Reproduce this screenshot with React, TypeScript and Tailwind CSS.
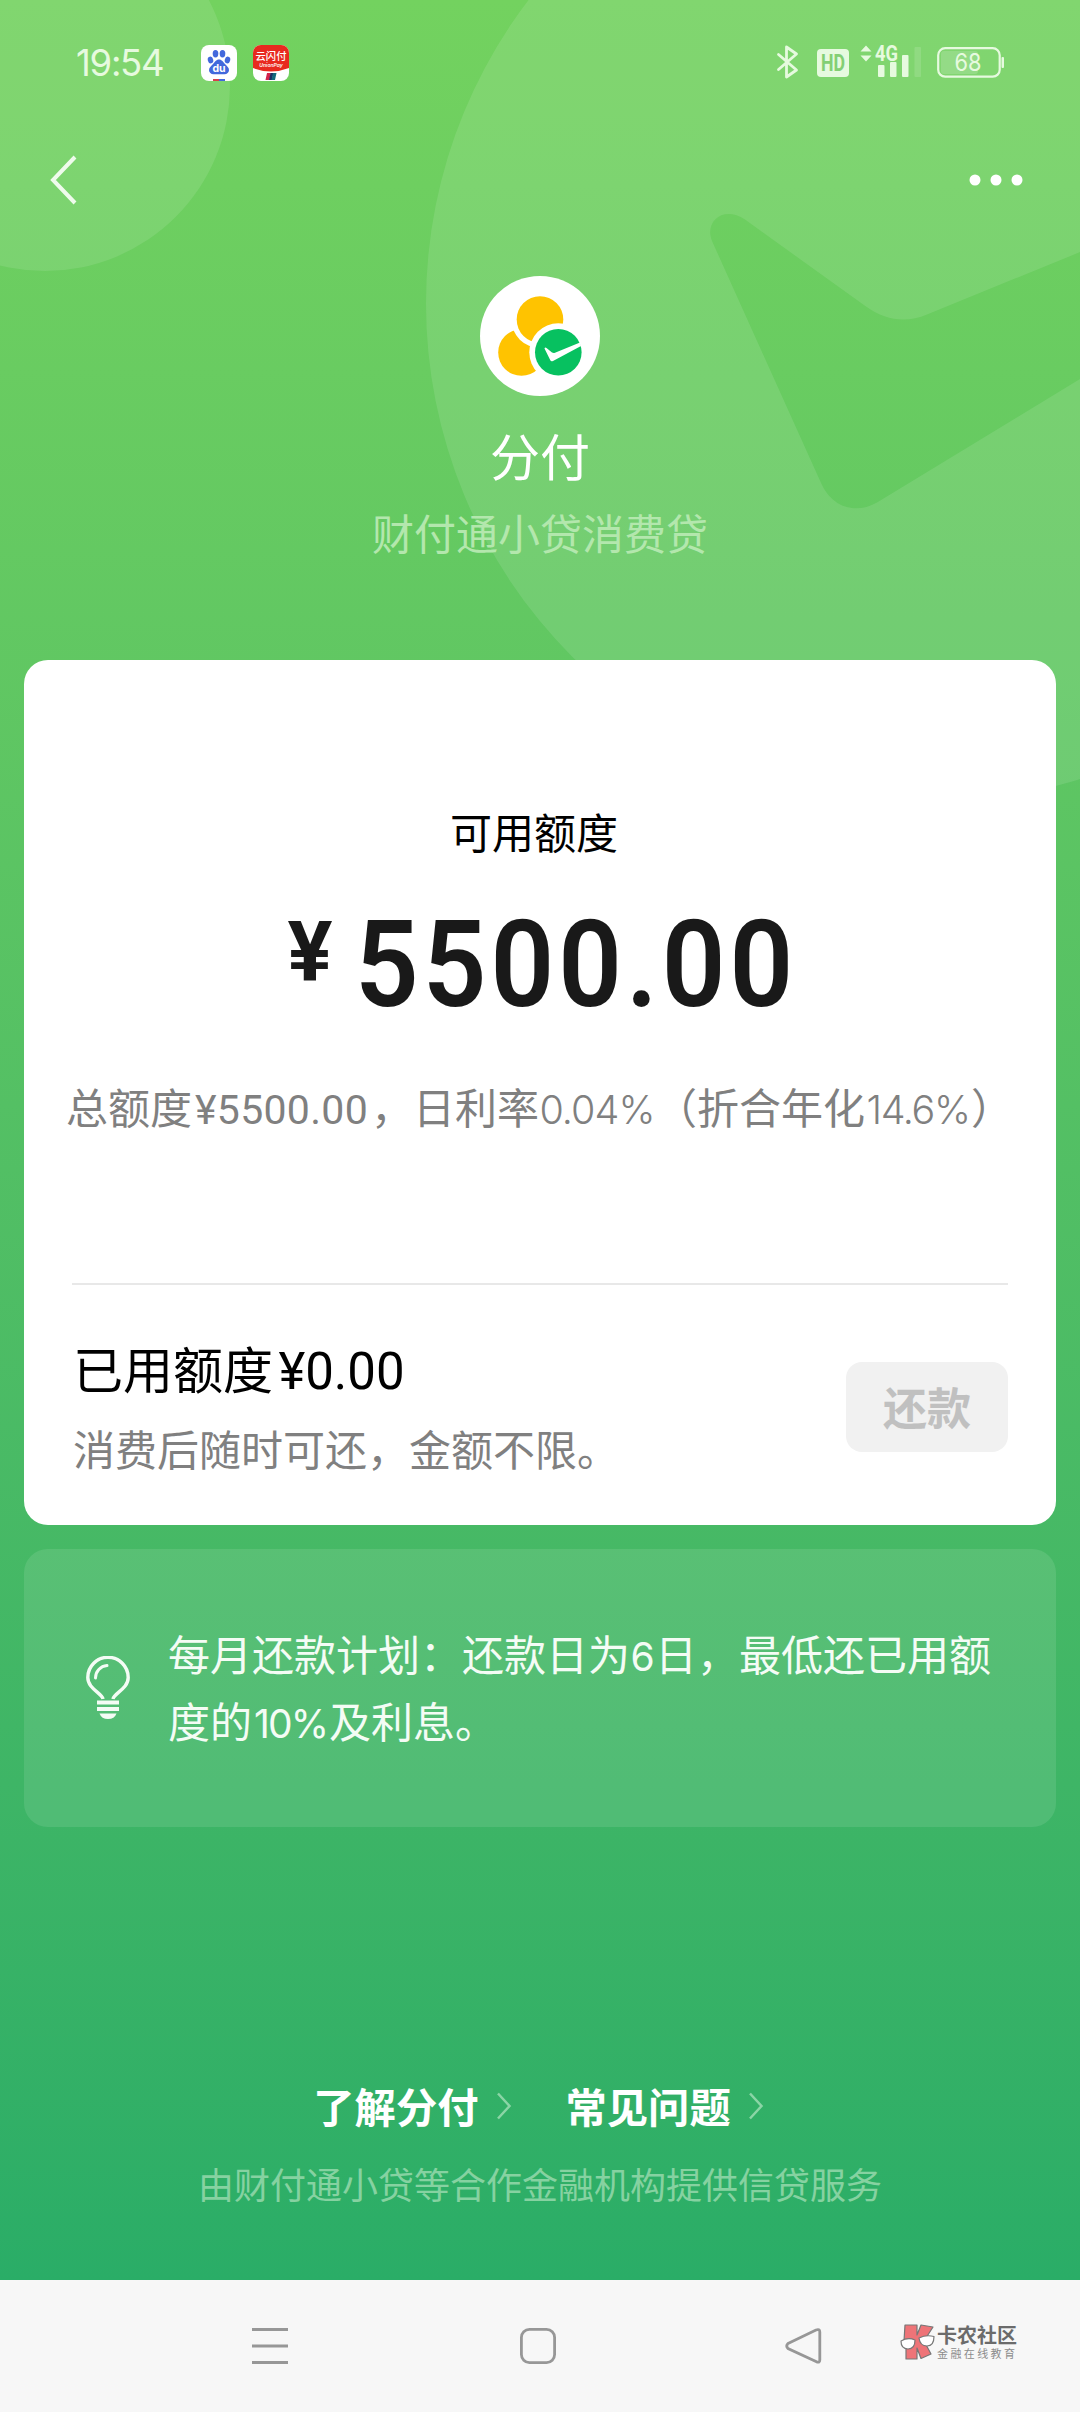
import type { ReactNode } from 'react';

const FOOTER_LINKS = ['了解分付', '常见问题'];

function Backdrop() {
  return (
    <svg className="absolute inset-0" width="1080" height="2280" viewBox="0 0 1080 2280" fill="#fff" fillOpacity="0.105">
      <circle cx="45" cy="86" r="185" />
      <path
        fillRule="evenodd"
        d="M926 -196.6a500 500 0 1 1 0 1000a500 500 0 1 1 0 -1000Z
           M745 219.6L866 306.5C886 321 907 323 927 314.5L1090 248V373L877 502.4C855 515 831 507 820.6 482L712 241C704 221 724 205 745 219.6Z"
      />
    </svg>
  );
}

function BaiduIcon() {
  return (
    <svg width="36" height="36" viewBox="0 0 36 36">
      <rect width="36" height="36" rx="8" fill="#fff" />
      <g fill="#4268dc">
        <ellipse cx="9.5" cy="15" rx="2.7" ry="3.4" transform="rotate(-15 9.5 15)" />
        <ellipse cx="14.5" cy="8.7" rx="2.8" ry="3.7" />
        <ellipse cx="21.5" cy="8.7" rx="2.8" ry="3.7" />
        <ellipse cx="26.5" cy="15" rx="2.7" ry="3.4" transform="rotate(15 26.5 15)" />
        <path d="M18 14.5c3 0 4.2 2.6 6 4.6c2 2.2 4 3.4 4 6.2c0 2.4-2 3.9-4.5 3.9h-11C10 29.2 8 27.7 8 25.3c0-2.8 2-4 4-6.2c1.8-2 3-4.6 6-4.6Z" />
      </g>
      <text x="18" y="27.2" textAnchor="middle" fontFamily="Inter" fontWeight="700" fontSize="10.5" fill="#fff">du</text>
      <rect x="12" y="34" width="6" height="2" fill="#d8404a" />
      <rect x="18" y="34" width="6" height="2" fill="#4268dc" />
    </svg>
  );
}

function UnionPayIcon() {
  return (
    <svg width="36" height="36" viewBox="0 0 36 36">
      <rect width="36" height="36" rx="8" fill="#fff" />
      <path d="M8 0H28A8 8 0 0 1 36 8V23Q18 30 0 23V8A8 8 0 0 1 8 0Z" fill="#e8291f" />
      <text x="18" y="15" textAnchor="middle" fontFamily="Noto Sans CJK SC" fontWeight="500" fontSize="10.3" fill="#fff">云闪付</text>
      <text x="18" y="21.5" textAnchor="middle" fontFamily="Inter" fontStyle="italic" fontWeight="600" fontSize="5" fill="#fff">UnionPay</text>
      <path d="M14 28h4l-1.5 7h-4Z" fill="#d3214b" />
      <path d="M17.5 28h3l-1.5 7h-3Z" fill="#1d2f63" />
      <path d="M20 28h3.5l-1.5 7h-3.5Z" fill="#12697a" />
    </svg>
  );
}

function StatusBar() {
  return (
    <div className="flex h-[122px] items-start justify-between pt-11 pr-[75px] pl-[76px] text-[#e6fadf]">
      <div className="flex items-start">
        <span className="w-[125px] font-['Inter'] text-[36.5px] leading-[38px] tracking-[-1.3px]">19:54</span>
        <div className="mt-px flex gap-4">
          <BaiduIcon />
          <UnionPayIcon />
        </div>
      </div>
      <svg className="-mt-3" width="230" height="60" viewBox="775 32 230 60" fill="currentColor">
        <path d="M778.5 54.5L796.5 70L786.5 77V47L796.5 54L778.5 69.5" fill="none" stroke="currentColor" strokeWidth="2.8" strokeLinejoin="round" strokeLinecap="round" />
        <rect x="817" y="49" width="32" height="28" rx="4" />
        <text x="833" y="71" textAnchor="middle" fontFamily="Roboto" fontWeight="700" fontSize="23" textLength="24" lengthAdjust="spacingAndGlyphs" fill="#83cf74">HD</text>
        <path d="M866 45.5L871.5 51.5H860.5ZM866 61.5L860.5 55.5H871.5Z" />
        <text x="875" y="61.3" fontFamily="Roboto" fontWeight="700" fontSize="22" textLength="23" lengthAdjust="spacingAndGlyphs">4G</text>
        <rect x="878" y="65" width="6.5" height="12" rx="1" />
        <rect x="890" y="62" width="6.5" height="15" rx="1" />
        <rect x="902" y="55" width="6.5" height="22" rx="1" />
        <rect x="914.5" y="47" width="6.5" height="30" rx="1" fillOpacity="0.16" />
        <rect x="941" y="51" width="37" height="23" rx="3" fill="#fff" fillOpacity="0.16" />
        <rect x="938.2" y="48.2" width="61.5" height="28.5" rx="7" fill="none" stroke="currentColor" strokeWidth="2.2" />
        <rect x="1001.5" y="57" width="2.5" height="11" rx="1" />
        <text x="968" y="71.3" textAnchor="middle" fontFamily="Inter" fontSize="24" textLength="27" lengthAdjust="spacingAndGlyphs">68</text>
      </svg>
    </div>
  );
}

function NavBar() {
  return (
    <div className="flex h-[116px] items-center justify-between pr-[57px] pl-12">
      <svg width="32" height="54" viewBox="0 0 32 54" fill="none" stroke="#effbec" strokeWidth="4">
        <path d="M27 4L5 27L27 50" />
      </svg>
      <svg width="54" height="12" viewBox="0 0 54 12" fill="#fff">
        <circle cx="6" cy="6" r="5.5" />
        <circle cx="27" cy="6" r="5.5" />
        <circle cx="48" cy="6" r="5.5" />
      </svg>
    </div>
  );
}

function Logo() {
  return (
    <svg width="120" height="120" viewBox="0 0 120 120">
      <circle cx="60" cy="60" r="60" fill="#fff" />
      <circle cx="41.5" cy="76.5" r="23.3" fill="#ffc300" />
      <circle cx="60" cy="43.5" r="28.5" fill="#fff" />
      <circle cx="60" cy="43.5" r="23.3" fill="#ffc300" />
      <circle cx="78.3" cy="76.3" r="29" fill="#fff" />
      <circle cx="78.3" cy="76.3" r="23.3" fill="#07c160" />
      <path d="M64.5 72.5Q65 71 66.5 72L72 76.5Q73.5 77.3 75 76.7L100 66.5L101 70L73 85Q71 86 70.2 84Z" fill="#fff" />
    </svg>
  );
}

// Latin runs inside Chinese copy keep a fixed measure
function Num({ className, children }: { className: string; children: ReactNode }) {
  return <span className={`inline-block text-center leading-none whitespace-nowrap ${className}`}>{children}</span>;
}

function QuotaCard() {
  return (
    <section className="mx-6 h-[865px] rounded-3xl bg-white px-12 pt-[141px]">
      <h2 className="mr-3 h-[60px] text-center text-[42px] leading-[60px] text-black">可用额度</h2>
      <div className="mt-[49px] flex h-[110px] items-start pl-[213px] font-['Roboto'] text-[#191919]">
        <span className="mt-px mr-[20px] w-[50px] text-center text-[84px] leading-[84px] font-bold">¥</span>
        <span className="origin-left scale-x-93 text-[120px] leading-[111px] font-semibold tracking-[4.3px]">5500.00</span>
      </div>
      <p className="-mx-[6px] mt-[56px] h-[60px] text-[42px] leading-[60px] whitespace-nowrap text-[#808080]">
        总额度
        <Num className="w-[179px] font-['Roboto'] text-[41px] tracking-[0.3px]">¥5500.00</Num>
        ，日利率
        <Num className="w-[116px] font-['Inter'] text-[39.5px] font-light tracking-[-0.9px]">0.04%</Num>
        （折合年化
        <Num className="w-[106px] font-['Inter'] text-[39.5px] font-light tracking-[-1.4px]">14.6%</Num>）
      </p>
      <div className="mt-[147px] h-[2px] bg-[#e8e8e8]" />
      <div className="flex items-start justify-between">
        <div>
          <p className="mt-[44px] h-[76px] pl-px text-[50px] leading-[76px] text-black">
            已用额度<Num className="w-[137px] font-['Roboto'] text-[51px]">¥0.00</Num>
          </p>
          <p className="mt-[8px] h-[70px] pl-px text-[42px] leading-[70px] text-[#808080]">消费后随时可还，金额不限。</p>
        </div>
        <button className="mt-[77px] h-[90px] w-[162px] rounded-2xl bg-[#f1f1f1] pb-0.5 text-[44px] leading-[86px] font-bold text-[#c0c0c0]">
          还款
        </button>
      </div>
    </section>
  );
}

function PlanTip() {
  return (
    <section className="mx-6 mt-6 flex h-[278px] items-center rounded-3xl bg-white/10 pl-[62px] text-[#f4fcf5]">
      <svg width="44" height="64" viewBox="0 0 44 64" fill="none" stroke="currentColor" strokeWidth="3.4">
        <path d="M17 43C16 37 1.8 33 1.8 21.5A20.2 20.2 0 0 1 42.2 21.5C42.2 33 28 37 27 43" />
        <path d="M9.5 22A12.5 12.5 0 0 1 21 9.5" strokeLinecap="round" strokeWidth="3" />
        <path d="M11 46.5H33M11 53H33" strokeWidth="4" />
        <path d="M13.5 57.5H30.5Q28.5 63 22 63Q15.5 63 13.5 57.5Z" fill="currentColor" stroke="none" />
      </svg>
      <p className="mb-[4px] ml-[38px] text-[42px] leading-[67px] whitespace-nowrap">
        每月还款计划：还款日为<Num className="w-[25px] font-['Inter'] text-[39px]">6</Num>日，最低还已用额
        <br />
        度的<Num className="w-[77px] font-['Inter'] text-[39px] tracking-[-1.9px]">10%</Num>及利息。
      </p>
    </section>
  );
}

function SystemNav() {
  return (
    <nav className="flex h-[132px] items-center bg-[#f7f7f7] pl-[252px]">
      <svg width="36" height="36" viewBox="0 0 36 36" stroke="#979797" strokeWidth="3">
        <path d="M0 1.5H36M0 18H36M0 34.5H36" />
      </svg>
      <svg className="ml-[232px]" width="36" height="36" viewBox="0 0 36 36" fill="none" stroke="#979797" strokeWidth="2.8">
        <rect x="1.4" y="1.4" width="33.2" height="33.2" rx="8" />
      </svg>
      <svg className="ml-[229px]" width="37" height="36" viewBox="0 0 37 36" fill="none" stroke="#979797" strokeWidth="2.8">
        <path d="M3 15.5L31 2Q34.8 0.5 34.8 4V32Q34.8 35.5 31 33.5L3 20.5Q0.5 18 3 15.5Z" />
      </svg>
      <div className="mb-2 ml-[78px] flex items-center">
        <svg width="35" height="36" viewBox="0 0 35 36" stroke="#777" strokeWidth="1.2" strokeLinejoin="round">
          <path d="M5 1H17V11L21 1L33 3L24 17L31 30L21 34.5L17 24V35H6V22L4 17Z" fill="#ee7478" />
          <path d="M1 17Q8 13 15 16Q15 25 8 25Q1 25 1 17Z" fill="#fff" />
          <path d="M19 14Q26 10.5 34 12.5Q34 22 27 22Q20 22 19 14Z" fill="#fff" />
        </svg>
        <div className="ml-[2px] whitespace-nowrap">
          <div className="text-[20px] leading-[22px] font-bold text-[#6b6b6b]">卡农社区</div>
          <div className="text-[11px] leading-[14px] tracking-[2.4px] text-[#8c8c8c]">金融在线教育</div>
        </div>
      </div>
    </nav>
  );
}

export default function App() {
  return (
    <div className="w-[1080px] font-['Noto_Sans_CJK_SC',sans-serif]">
      <main className="relative h-[2280px] overflow-hidden bg-linear-to-b from-[#73d25f] to-[#2aad67]">
        <Backdrop />
        <div className="relative flex h-full flex-col">
          <StatusBar />
          <NavBar />
          <header className="flex h-[422px] flex-col items-center pt-[38px]">
            <Logo />
            <h1 className="mt-[22px] text-[50px] leading-[72px] text-white">分付</h1>
            <p className="mt-[12px] text-[42px] leading-[60px] text-[#b3e7ad]">财付通小贷消费贷</p>
          </header>
          <QuotaCard />
          <PlanTip />
          <footer className="mt-[248px] flex flex-col items-center">
            <div className="mr-[3px] flex gap-[54px]">
              {FOOTER_LINKS.map((label) => (
                <a key={label} className="flex items-center gap-[17px] text-[41.3px] leading-[60px] font-bold text-white">
                  {label}
                  <svg className="mt-0.5" width="16" height="28" viewBox="0 0 16 28" fill="none" stroke="#8bd5a6" strokeWidth="2.5">
                    <path d="M2 1.5L13.5 14L2 26.5" />
                  </svg>
                </a>
              ))}
            </div>
            <p className="mt-[22px] text-[36px] leading-[52px] text-[#86d2a1]">由财付通小贷等合作金融机构提供信贷服务</p>
          </footer>
        </div>
      </main>
      <SystemNav />
    </div>
  );
}
